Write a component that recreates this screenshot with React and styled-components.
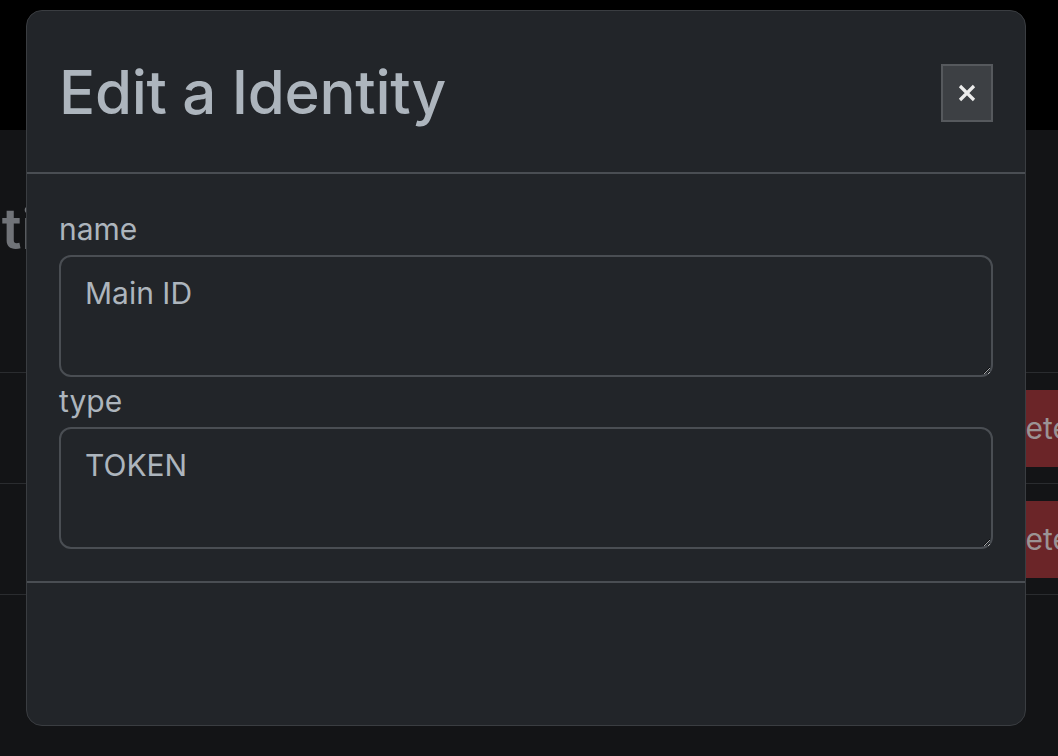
import React from 'react';
import styled, { createGlobalStyle } from 'styled-components';

const GlobalStyle = createGlobalStyle`
  html, body {
    margin: 0;
    padding: 0;
    background: #131416;
    overflow: hidden;
    font-family: Inter, "Liberation Sans", sans-serif;
  }
`;

const Navbar = styled.div`
  height: 130px;
  background: #000;
`;

const Main = styled.div`
  width: 1240px;
  margin-left: -120px;
  padding: 67px 0 0 4px;
  box-sizing: border-box;
`;

const PageTitle = styled.h1`
  margin: 0;
  font-size: 56px;
  font-weight: 600;
  line-height: 65px;
  color: #707378;
`;

const Table = styled.div`
  display: flex;
  flex-direction: column;
`;

const Row = styled.div`
  height: 110px;
  display: flex;
  align-items: center;
  justify-content: flex-end;
  padding-right: 25px;
  border-bottom: 1px solid #2a2c2f;
`;

const DeleteButton = styled.button`
  font-family: inherit;
  font-size: 30px;
  line-height: 1.5;
  padding: 15px 24px;
  border: 1px solid #6b2528;
  background: #6b2528;
  color: #9b9394;
  border-radius: 0;
`;

const Overlay = styled.div`
  position: fixed;
  inset: 0;
`;

const Dialog = styled.div`
  width: 1000px;
  height: 716px;
  margin: 10px 0 0 26px;
  box-sizing: border-box;
  background: #222529;
  border: 1px solid #3a3d41;
  border-radius: 16px;
  display: flex;
  flex-direction: column;
  color: #adb5bd;
`;

const Header = styled.div`
  display: flex;
  align-items: center;
  justify-content: space-between;
  padding: 33px 32px 31px;
  border-bottom: 2px solid #4a4e53;
`;

const Title = styled.h2`
  margin: 0;
  font-size: 60px;
  font-weight: 500;
  line-height: 97px;
  letter-spacing: -0.3px;
`;

const CloseButton = styled.button`
  width: 52px;
  height: 58px;
  padding: 0;
  display: flex;
  align-items: center;
  justify-content: center;
  background: #3d4044;
  border: 2px solid #56595d;
  border-radius: 0;
  color: #ececec;
`;

const Body = styled.div`
  padding: 31px 32px 32px;
  border-bottom: 2px solid #4a4e53;
  display: flex;
  flex-direction: column;
`;

const Label = styled.label`
  display: block;
  font-size: 30px;
  line-height: 48px;
  margin-bottom: 2px;
`;

const TextArea = styled.textarea`
  display: block;
  box-sizing: border-box;
  width: 100%;
  height: 122px;
  padding: 12px 24px;
  font-family: inherit;
  font-size: 30px;
  line-height: 48px;
  color: #adb5bd;
  background: #222529;
  border: 2px solid #4a4e53;
  border-radius: 12px;
  resize: vertical;
  outline: none;
`;

const Footer = styled.div`
  flex: 1;
`;

const fields = [
  { id: 'name', value: 'Main ID' },
  { id: 'type', value: 'TOKEN' },
];

export default function App() {
  return (
    <>
      <GlobalStyle />
      <Navbar />
      <Main>
        <PageTitle>Identities</PageTitle>
        <Table>
          <Row />
          <Row>
            <DeleteButton>Delete</DeleteButton>
          </Row>
          <Row>
            <DeleteButton>Delete</DeleteButton>
          </Row>
        </Table>
      </Main>
      <Overlay>
        <Dialog>
          <Header>
            <Title>Edit a Identity</Title>
            <CloseButton aria-label="Close">
              <svg width="18" height="18" viewBox="0 0 18 18">
                <path d="M2 2 L16 16 M16 2 L2 16" stroke="currentColor" strokeWidth="3.2" />
              </svg>
            </CloseButton>
          </Header>
          <Body>
            {fields.map((f) => (
              <div key={f.id}>
                <Label htmlFor={f.id}>{f.id}</Label>
                <TextArea id={f.id} defaultValue={f.value} />
              </div>
            ))}
          </Body>
          <Footer />
        </Dialog>
      </Overlay>
    </>
  );
}
